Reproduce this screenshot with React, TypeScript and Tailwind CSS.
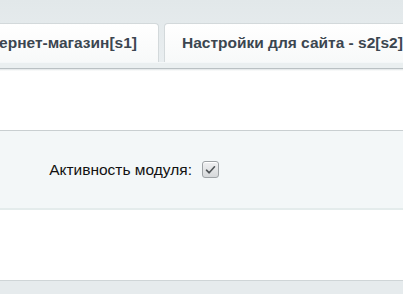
import React from "react";

export default function App() {
  const font = { fontFamily: '"Liberation Sans", Arial, sans-serif' };
  return (
    <div className="w-[403px] h-[294px] overflow-hidden bg-white flex flex-col" style={font}>
      {/* Tabs header */}
      <div className="h-[62px] shrink-0 bg-gradient-to-b from-[#e2e8ea] to-[#e9eef0] flex items-end overflow-hidden">
        <div className="flex gap-[5px] items-end">
          <div className="w-[159px] flex justify-end overflow-hidden shrink-0">
            <div className="shrink-0 h-[39px] pl-[20px] pr-[21px] flex items-center bg-gradient-to-b from-white to-[#f7f9f9] border border-b-0 border-[#d3d9db] rounded-t-[4px] text-[15.5px] font-bold text-[#3b4650] whitespace-nowrap">
              Интернет-магазин[s1]
            </div>
          </div>
          <div className="shrink-0 h-[39px] pl-[17px] pr-[20px] flex items-center bg-gradient-to-b from-white to-[#f7f9f9] border border-b-0 border-[#d3d9db] rounded-t-[4px] text-[15.5px] font-bold text-[#3b4650] whitespace-nowrap">
            Настройки для сайта - s2[s2]
          </div>
        </div>
      </div>
      {/* strip under tabs */}
      <div className="h-[6px] shrink-0 bg-[#eaeff0] border-t border-[#f4f7f8]" />
      <div className="h-[1px] shrink-0 bg-[#b9c0c3]" />
      <div className="h-[2px] shrink-0 bg-gradient-to-b from-[#dfe4e6] to-white" />
      {/* white area */}
      <div className="h-[59px] shrink-0 bg-white" />
      {/* option row */}
      <div className="h-[80px] shrink-0 bg-[#f3f7f8] border-t border-[#c9cfd1] border-b-2 border-b-[#e4ecec] flex items-center">
        <div className="w-[194px] text-right text-[15.5px] text-[#111] pr-[2px] whitespace-nowrap">Активность модуля:</div>
        <div className="ml-[8px] w-[17px] h-[17px] rounded-[3px] border border-[#9ea3a6] bg-gradient-to-b from-[#f0f1f2] to-[#d6d9db] flex items-center justify-center shadow-[inset_0_1px_0_#ffffff]">
          <svg width="11" height="10" viewBox="0 0 11 10">
            <path d="M1.5 5.2 L4.2 7.8 L9.5 1.8" fill="none" stroke="#4f5457" strokeWidth="1.6" strokeLinecap="round" strokeLinejoin="round" />
          </svg>
        </div>
      </div>
      {/* white area */}
      <div className="h-[70px] shrink-0 bg-white" />
      {/* bottom bar */}
      <div className="flex-1 bg-[#e6ebed] border-t border-[#cfd5d7]" />
    </div>
  );
}
